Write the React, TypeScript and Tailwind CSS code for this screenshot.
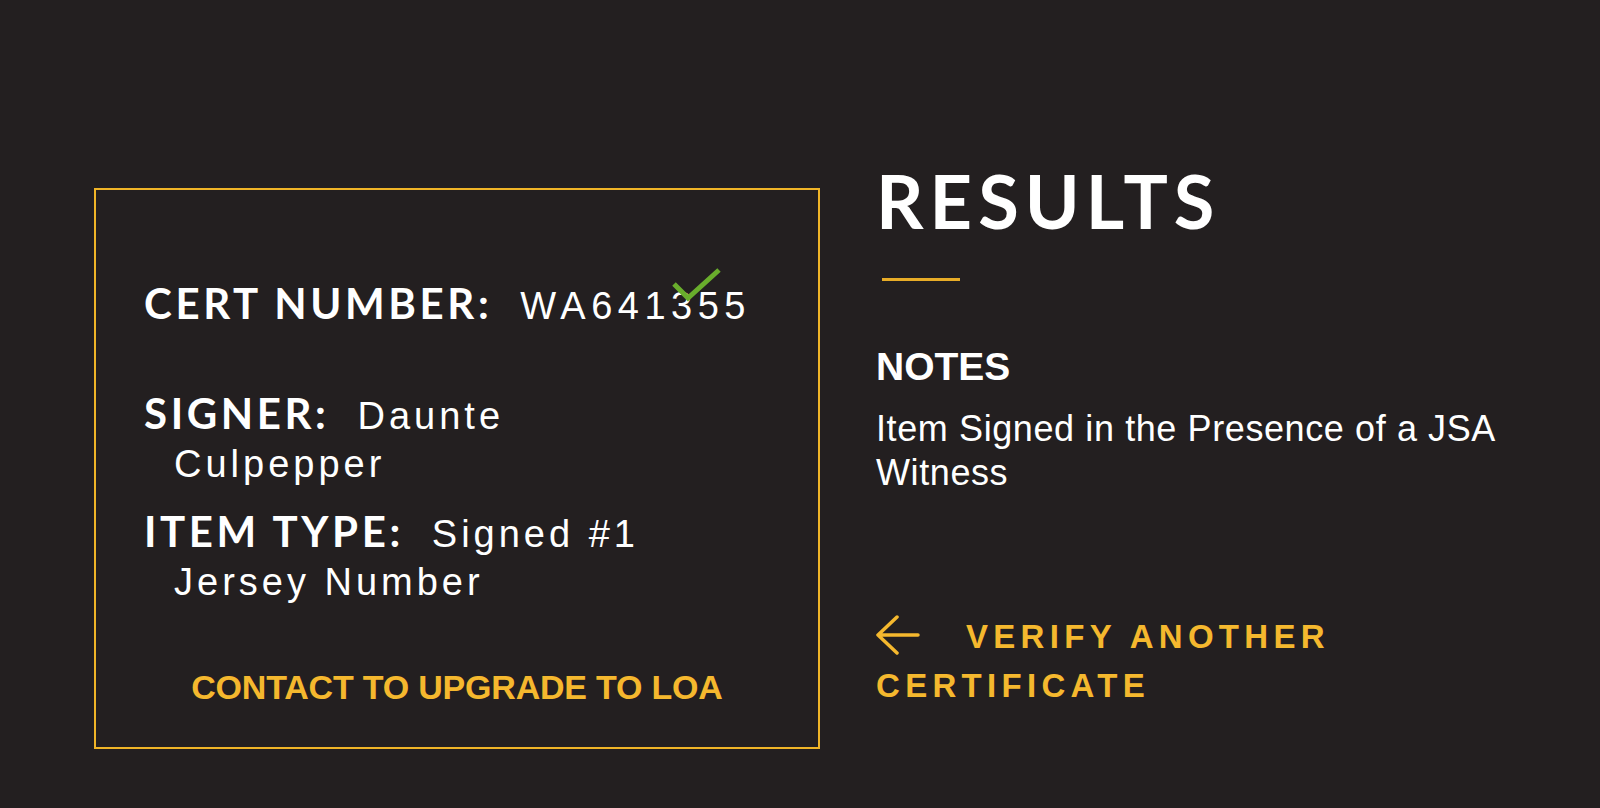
import React from 'react';

const labelFont = { fontFamily: 'Lato, "Open Sans", sans-serif' };

const CheckMark: React.FC = () => (
  <svg
    className="absolute left-[576px] top-[76px]"
    width="50"
    height="38"
    viewBox="0 0 50 38"
    fill="none"
  >
    <path d="M2 18 L16 32 L47 4" stroke="#69ad2c" strokeWidth="5" strokeLinecap="butt" strokeLinejoin="miter" />
  </svg>
);

const ArrowLeft: React.FC = () => (
  <svg className="inline-block align-[-7px] mr-[46px]" width="44" height="40" viewBox="0 0 44 40" fill="none">
    <path d="M21 2 L2 20 L21 38 M2 20 L42 20" stroke="#f5b82e" strokeWidth="3.5" strokeLinecap="round" strokeLinejoin="round" />
  </svg>
);

interface FieldProps {
  label: string;
  children: React.ReactNode;
  className?: string;
}

const Field: React.FC<FieldProps> = ({ label, children, className = '' }) => (
  <p className={`pl-[30px] -indent-[30px] text-[38px] leading-[48px] tracking-[4px] text-white font-['Liberation_Sans',Arial,sans-serif] ${className}`}>
    <span className="text-[42px] font-bold tracking-[3.6px] mr-[28px]" style={labelFont}>
      {label}
    </span>
    {children}
  </p>
);

export default function App() {
  return (
    <div className="min-h-[808px] w-full bg-[#231f20] flex items-start pl-[94px] pt-[159px] gap-[56px]">
      {/* certificate card */}
      <div className="relative mt-[29px] w-[726px] h-[561px] border-2 border-[#f0b427] pl-[48px] pt-[89px] flex flex-col">
        <Field label="CERT NUMBER:" className="whitespace-nowrap">
          <span className="tracking-[5.5px]">WA641355</span>
        </Field>
        <CheckMark />
        <Field label="SIGNER:" className="mt-[59px]">
          Daunte
          <br />
          Culpepper
        </Field>
        <Field label="ITEM TYPE:" className="mt-[19px]">
          Signed #1
          <br />
          Jersey Number
        </Field>
        <p className="mt-[61px] -ml-[48px] text-center text-[34px] leading-[40px] font-bold text-[#f5b82e] tracking-[-0.2px] font-['Liberation_Sans',Arial,sans-serif]">
          CONTACT TO UPGRADE TO LOA
        </p>
      </div>

      {/* results column */}
      <div className="w-[660px] flex flex-col font-['Liberation_Sans',Arial,sans-serif]">
        <h1 className="mt-[2px] text-[74px] leading-[80px] font-bold text-white tracking-[6px]" style={labelFont}>
          RESULTS
        </h1>
        <div className="mt-[37px] ml-[6px] w-[78px] h-[3px] bg-[#e8ac27]" />
        <h2 className="mt-[64px] text-[39px] leading-[44px] font-bold text-white">NOTES</h2>
        <p className="mt-[18px] text-[36px] leading-[44px] text-white tracking-[0.6px]">
          Item Signed in the Presence of a JSA Witness
        </p>
        <a href="#" className="mt-[117px] text-[33px] leading-[49px] font-bold text-[#f5b82e] tracking-[5.3px]">
          <ArrowLeft />
          VERIFY ANOTHER
          <br />
          CERTIFICATE
        </a>
      </div>
    </div>
  );
}
